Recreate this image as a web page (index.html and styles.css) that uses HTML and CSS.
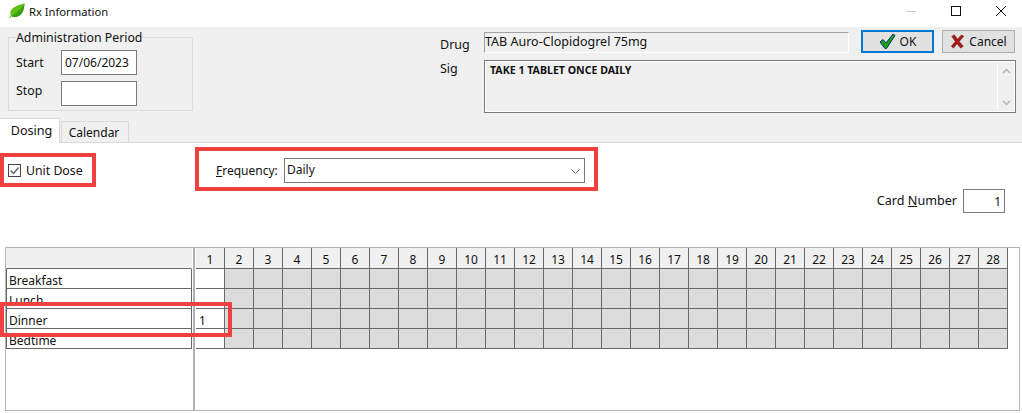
FILE: index.html
```html
<!DOCTYPE html>
<html lang="en">
<head>
<meta charset="utf-8">
<title>Rx Information</title>
<link rel="stylesheet" href="styles.css">
</head>
<body>
<div class="window">
  <header class="titlebar">
    <svg class="leaf" width="16" height="16" viewBox="0 0 16 16"><path d="M15.5 0.5C15 7 14 13 6 14C4.500 14.200 3 13.800 2.500 13L0.800 15.500L0.200 15L1.800 12C0 8 3 3 15.500 0.500Z" fill="#5fc01e"/><path d="M15.500 0.500C15 7 14 13 6 14C4.500 14.200 3 13.800 2.500 13C7 11 11 7 15.500 0.500Z" fill="#3f9f12"/></svg>
    <span class="title">Rx Information</span>
    <div class="winbtns">
      <svg width="10" height="10" viewBox="0 0 10 10"><path d="M0 5.500H10" stroke="#c8c8c8"/></svg>
      <svg width="10" height="10" viewBox="0 0 10 10"><rect x=".5" y=".5" width="9" height="9" fill="none" stroke="#111"/></svg>
      <svg width="10" height="10" viewBox="0 0 10 10"><path d="M0 0L10 10M10 0L0 10" stroke="#111"/></svg>
    </div>
  </header>

  <section class="top">
    <div class="period">
      <span class="legend">Administration Period</span>
      <div class="period-row"><span>Start</span><div class="field date">07/06/2023</div></div>
      <div class="period-row"><span class="stop-label">Stop</span><div class="field date"></div></div>
    </div>
    <div class="rx">
      <div class="drug-row">
        <span class="rx-label">Drug</span>
        <div class="drug-field">TAB Auro-Clopidogrel 75mg</div>
        <button class="btn btn-ok"><svg width="17" height="17" viewBox="0 0 17 17"><path d="M1 9L4 6.500L7 10L14 1L16 2.500L7.500 15.500H6Z" fill="#17a317" stroke="#0a2f6b" stroke-width="1"/></svg>OK</button>
        <button class="btn"><svg width="15" height="15" viewBox="0 0 17 17"><path d="M2 2.500L5 1L8.500 6L13 1L15.500 2.500L10.500 8.500L15 14L12 16L8 11L4 16L1.500 14L6 8.500Z" fill="#a81818" stroke="#6b0d0d" stroke-width=".6"/></svg>Cancel</button>
      </div>
      <div class="sig-row">
        <span class="rx-label">Sig</span>
        <div class="sig-field">
          <div class="sig-text">TAKE 1 TABLET ONCE DAILY</div>
          <div class="sig-scroll">
            <svg width="9" height="6" viewBox="0 0 9 6"><path d="M1 5L4.500 1.500L8 5" fill="none" stroke="#b4b4b4" stroke-width="1.500"/></svg>
            <svg width="9" height="6" viewBox="0 0 9 6"><path d="M1 1L4.500 4.500L8 1" fill="none" stroke="#b4b4b4" stroke-width="1.500"/></svg>
          </div>
        </div>
      </div>
    </div>
  </section>

  <nav class="tabs">
    <div class="tab active">Dosing</div>
    <div class="tab">Calendar</div>
  </nav>

  <main class="content">
    <div class="options">
      <label class="unit"><svg width="14" height="14" viewBox="0 0 14 14"><rect x=".5" y=".5" width="12" height="12" fill="#fff" stroke="#444"/><path d="M2.500 6.500L5.500 9.500L10.500 3.500" fill="none" stroke="#666" stroke-width="1.500"/></svg>Unit Dose</label>
      <div class="freq">
        <span class="freq-label"><u>F</u>requency:</span>
        <div class="select">Daily<svg width="9" height="6" viewBox="0 0 9 6"><path d="M.5 .5L4.500 4.500L8.500 .5" fill="none" stroke="#666"/></svg></div>
      </div>
    </div>
    <div class="card"><span class="card-label">Card <u>N</u>umber</span><div class="field card-num">1</div></div>

    <div class="grid-frame">
      <div class="labels">
        <div class="lab head"></div>
        <div class="lab">Breakfast</div>
        <div class="lab">Lunch</div>
        <div class="lab">Dinner</div>
        <div class="lab">Bedtime</div>
      </div>
      <div class="days">
        <div class="h">1</div><div class="h">2</div><div class="h">3</div><div class="h">4</div><div class="h">5</div><div class="h">6</div><div class="h">7</div><div class="h">8</div><div class="h">9</div><div class="h">10</div><div class="h">11</div><div class="h">12</div><div class="h">13</div><div class="h">14</div><div class="h">15</div><div class="h">16</div><div class="h">17</div><div class="h">18</div><div class="h">19</div><div class="h">20</div><div class="h">21</div><div class="h">22</div><div class="h">23</div><div class="h">24</div><div class="h">25</div><div class="h">26</div><div class="h">27</div><div class="h">28</div>
        <div class="c on"></div><div class="c"></div><div class="c"></div><div class="c"></div><div class="c"></div><div class="c"></div><div class="c"></div><div class="c"></div><div class="c"></div><div class="c"></div><div class="c"></div><div class="c"></div><div class="c"></div><div class="c"></div><div class="c"></div><div class="c"></div><div class="c"></div><div class="c"></div><div class="c"></div><div class="c"></div><div class="c"></div><div class="c"></div><div class="c"></div><div class="c"></div><div class="c"></div><div class="c"></div><div class="c"></div><div class="c"></div>
        <div class="c on"></div><div class="c"></div><div class="c"></div><div class="c"></div><div class="c"></div><div class="c"></div><div class="c"></div><div class="c"></div><div class="c"></div><div class="c"></div><div class="c"></div><div class="c"></div><div class="c"></div><div class="c"></div><div class="c"></div><div class="c"></div><div class="c"></div><div class="c"></div><div class="c"></div><div class="c"></div><div class="c"></div><div class="c"></div><div class="c"></div><div class="c"></div><div class="c"></div><div class="c"></div><div class="c"></div><div class="c"></div>
        <div class="c on">1</div><div class="c"></div><div class="c"></div><div class="c"></div><div class="c"></div><div class="c"></div><div class="c"></div><div class="c"></div><div class="c"></div><div class="c"></div><div class="c"></div><div class="c"></div><div class="c"></div><div class="c"></div><div class="c"></div><div class="c"></div><div class="c"></div><div class="c"></div><div class="c"></div><div class="c"></div><div class="c"></div><div class="c"></div><div class="c"></div><div class="c"></div><div class="c"></div><div class="c"></div><div class="c"></div><div class="c"></div>
        <div class="c on"></div><div class="c"></div><div class="c"></div><div class="c"></div><div class="c"></div><div class="c"></div><div class="c"></div><div class="c"></div><div class="c"></div><div class="c"></div><div class="c"></div><div class="c"></div><div class="c"></div><div class="c"></div><div class="c"></div><div class="c"></div><div class="c"></div><div class="c"></div><div class="c"></div><div class="c"></div><div class="c"></div><div class="c"></div><div class="c"></div><div class="c"></div><div class="c"></div><div class="c"></div><div class="c"></div><div class="c"></div>
      </div>
    </div>
  </main>

  <div class="mark mark-unit"></div>
  <div class="mark mark-freq"></div>
  <div class="mark mark-dinner"></div>
</div>
</body>
</html>
```
FILE: styles.css
```css
* { box-sizing: border-box; }
html, body { margin: 0; height: 100%; overflow: hidden; }
body { background: #fff; color: #111; font: 12px/16px "Noto Sans", "Open Sans", sans-serif; }
.window { position: relative; width: 1022px; height: 413px; display: flex; flex-direction: column; }

.titlebar { height: 27px; flex: none; display: flex; align-items: center; padding: 0 0 3px 9px; background: #fff; }
.leaf { flex: none; margin-top: -2px; }
.title { margin-left: 4px; font-size: 11.200px; }
.winbtns { margin-left: auto; display: flex; gap: 35px; padding-right: 16px; margin-top: -2px; }

.top { height: 91px; flex: none; background: #f0f0f0; display: flex; padding: 10px 6px 0 8px; }
.period { position: relative; width: 185px; height: 74px; padding: 12px 7px 0; border: 1px solid #dcdcdc; font-size: 12.300px; flex: none; }
.legend { position: absolute; left: 7px; top: -8px; background: #f0f0f0; }
.period-row { display: flex; align-items: center; justify-content: space-between; width: 121px; height: 25px; margin-bottom: 6px; }
.stop-label { padding-bottom: 5px; }
.field { background: #fff; border: 1px solid #7a7a7a; }
.date { width: 76px; height: 25px; padding: 4px 0 0 3px; font-size: 12px; }

.rx { margin: -7px 0 0 247px; flex: 1; }
.drug-row { display: flex; align-items: flex-start; height: 30px; }
.rx-label { width: 44px; font-size: 12.500px; padding-top: 7px; flex: none; }
.drug-field { width: 365px; height: 21px; margin-top: 2px; border: 1px solid; border-color: #a0a0a0 #fff #fff #a0a0a0; padding: 1px 0 0; font-size: 12.500px; }
.btn { width: 73px; height: 23px; margin-left: 8px; padding: 0; display: flex; align-items: center; justify-content: center; gap: 4px; background: #e1e1e1; border: 1px solid #adadad; font: 12px "Noto Sans", sans-serif; color: #111; }
.btn-ok { margin-left: 12px; border: 2px solid #0078d7; }
.sig-row { display: flex; height: 53px; }
.sig-row .rx-label { padding-top: 1px; }
.sig-field { width: 532px; height: 53px; border: 1px solid #7a7a7a; outline: 1px solid #fff; outline-offset: -2px; display: flex; justify-content: space-between; }
.sig-text { padding: 2px 0 0 5px; font-size: 10.600px; font-weight: 700; line-height: 14px; }
.sig-scroll { width: 17px; margin: 2px 1px 2px 0; border-left: 1px solid #fff; display: flex; flex-direction: column; justify-content: space-between; align-items: center; padding: 5px 0 4px; }

.tabs { height: 25px; flex: none; background: #f0f0f0; display: flex; align-items: flex-end; }
.tab { width: 68px; height: 22px; margin-left: 1px; background: #f0f0f0; border: 1px solid #d9d9d9; border-bottom: 0; text-align: center; padding: 3px 2px 0 0; }
.tab.active { width: 60px; height: 25px; margin-left: 0; background: #fff; border-left: 0; padding: 4px 0 0 4px; position: relative; z-index: 1; font-size: 12.600px; }

.content { flex: 1; background: #fff; border-top: 1px solid #d9d9d9; display: flex; flex-direction: column; margin-top: -1px; }
.options { display: flex; align-items: flex-start; height: 46px; flex: none; }
.unit { display: flex; align-items: center; gap: 4px; margin: 20px 0 0 8px; width: 183px; font-size: 12.300px; }
.freq { display: flex; align-items: center; margin-top: 15px; margin-left: 25px; }
.freq-label { width: 68px; }
.select { width: 301px; height: 25px; border: 1px solid #7a7a7a; padding: 3px 0 0 2px; display: flex; justify-content: space-between; }
.select svg { margin: 7px 4px 0 0; }
.card { display: flex; justify-content: flex-end; align-items: center; gap: 6px; height: 24px; padding-right: 17px; flex: none; }
.card-label { font-size: 12.600px; }
.card-num { width: 42px; height: 24px; text-align: right; padding: 4px 3px 0 0; }

.grid-frame { margin: 34px 2px 2px 5px; flex: 1; min-height: 0; border: 1px solid #b4b4b4; display: flex; align-items: flex-start; }
.labels { width: 189px; flex: none; align-self: stretch; border-right: 2px solid #b0b0b4; padding-right: 1px; }
.lab { height: 20px; border: 1px solid #696969; border-top: 0; padding: 4px 0 0 2px; line-height: 16px; }
.lab.head { height: 21px; background: #f0f0f0; border-left-color: #f0f0f0; border-right-color: #f0f0f0; }
.days { display: grid; margin-left: 1px; grid-template-columns: repeat(28, 29px); grid-template-rows: 21px repeat(4, 20px); }
.h { background: #f0f0f0; border-right: 1px solid #696969; border-bottom: 1px solid #696969; text-align: center; padding-top: 4px; }
.c { background: #dcdcdc; border-right: 1px solid #696969; border-bottom: 1px solid #696969; padding: 4px 0 0 3px; }
.c.on { background: #fff; }

.mark { position: absolute; border: 4px solid #f04040; pointer-events: none; }
.mark-unit { left: 0; top: 153px; width: 96px; height: 34px; }
.mark-freq { left: 195px; top: 147px; width: 403px; height: 44px; }
.mark-dinner { left: 0; top: 302px; width: 232px; height: 35px; }
```
